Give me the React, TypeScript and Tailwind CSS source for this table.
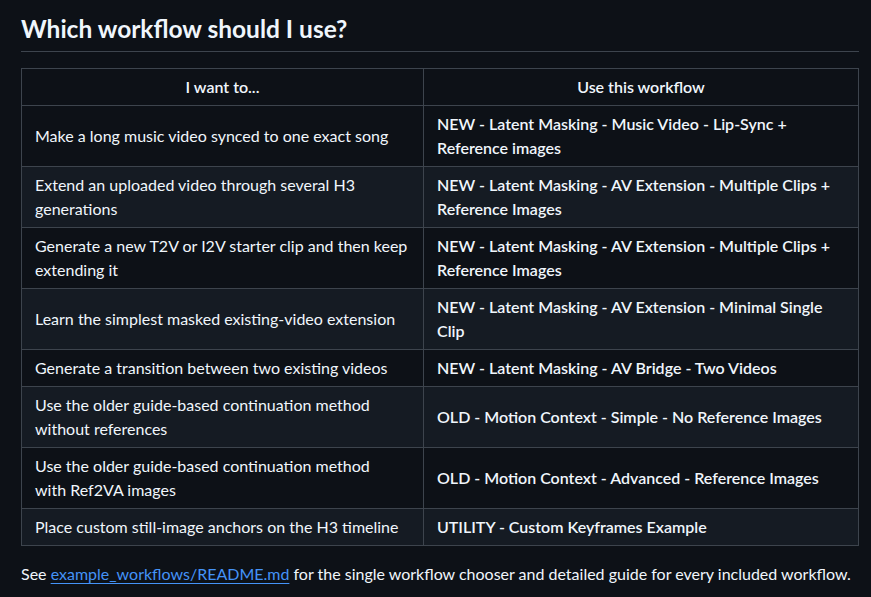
const rows: [string[], string[]][] = [
  [["Make a long music video synced to one exact song"], ["NEW - Latent Masking - Music Video - Lip-Sync +", "Reference images"]],
  [["Extend an uploaded video through several H3", "generations"], ["NEW - Latent Masking - AV Extension - Multiple Clips +", "Reference Images"]],
  [["Generate a new T2V or I2V starter clip and then keep", "extending it"], ["NEW - Latent Masking - AV Extension - Multiple Clips +", "Reference Images"]],
  [["Learn the simplest masked existing-video extension"], ["NEW - Latent Masking - AV Extension - Minimal Single", "Clip"]],
  [["Generate a transition between two existing videos"], ["NEW - Latent Masking - AV Bridge - Two Videos"]],
  [["Use the older guide-based continuation method", "without references"], ["OLD - Motion Context - Simple - No Reference Images"]],
  [["Use the older guide-based continuation method", "with Ref2VA images"], ["OLD - Motion Context - Advanced - Reference Images"]],
  [["Place custom still-image anchors on the H3 timeline"], ["UTILITY - Custom Keyframes Example"]],
];

function Lines({ lines }: { lines: string[] }) {
  return (
    <>
      {lines.map((l, i) => (
        <div key={i} className="whitespace-nowrap">
          {l}
        </div>
      ))}
    </>
  );
}

export default function App() {
  return (
    <div
      className="min-h-[597px] w-[871px] bg-[#0d1117] text-[#f0f6fc] text-[16px] leading-6 pl-[21px] pr-[12px] pt-[14px]"
      style={{ fontFamily: 'Lato, "Noto Sans", sans-serif' }}
    >
      <h2 className="text-[24.5px] font-bold leading-[30px] pb-[7px] border-b border-[#3d444d] mb-4">
        Which workflow should I use?
      </h2>
      <table className="w-[838px] border-collapse">
        <thead>
          <tr className="bg-[#0d1117]">
            <th className="w-[402px] border border-[#3d444d] px-[13px] py-[6px] text-center font-semibold">
              I want to...
            </th>
            <th className="border border-[#3d444d] px-[13px] py-[6px] text-center font-semibold">
              Use this workflow
            </th>
          </tr>
        </thead>
        <tbody>
          {rows.map(([want, use], i) => (
            <tr key={i} className={i % 2 === 1 ? "bg-[#151b23]" : "bg-[#0d1117]"}>
              <td className="border border-[#3d444d] px-[13px] py-[6px] align-middle">
                <Lines lines={want} />
              </td>
              <td className="border border-[#3d444d] px-[13px] py-[6px] align-middle font-semibold">
                <Lines lines={use} />
              </td>
            </tr>
          ))}
        </tbody>
      </table>
      <p className="mt-4 whitespace-nowrap">
        See{" "}
        <a href="#" className="text-[#4493f8] underline underline-offset-[3px]">
          example_workflows/README.md
        </a>{" "}
        for the single workflow chooser and detailed guide for every included workflow.
      </p>
    </div>
  );
}
